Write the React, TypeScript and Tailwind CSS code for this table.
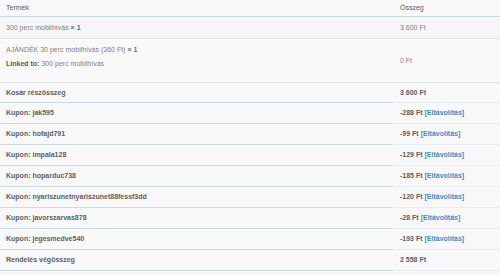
import React from "react";

const coupons: [string, string][] = [
  ["jak595", "-288 Ft"],
  ["hofajd791", "-99 Ft"],
  ["impala128", "-129 Ft"],
  ["hoparduc738", "-185 Ft"],
  ["nyariszunetnyariszunet88fessf3dd", "-120 Ft"],
  ["javorszarvas878", "-28 Ft"],
  ["jegesmedve540", "-193 Ft"],
];

export default function App() {
  return (
    <div
      className="w-[500px] h-[275px] bg-[#f8f8f8] text-[7px] leading-[9px] text-[#7f7f7f] overflow-hidden"
      style={{ fontFamily: '"Liberation Sans", Arial, sans-serif' }}
    >
      <table className="w-full border-collapse">
        <tbody>
          <tr className="h-[16px] bg-[#f8f8f8]">
            <td className="pl-[6px] text-[#606060] border-b border-[#c6dbe5] w-[393px]">Termék</td>
            <td className="pl-[7px] text-[#606060] border-b border-[#c6dbe5]">Összeg</td>
          </tr>
          <tr className="h-[22px] bg-[#f6f6f6]">
            <td className="pl-[6px] border-b border-[#e2e2e2]">
              300 perc mobilhívás <strong className="text-[#6a6a6a]">× 1</strong>
            </td>
            <td className="pl-[7px] border-b border-[#e2e2e2]">3 600 Ft</td>
          </tr>
          <tr className="h-[44px] bg-[#f9f9f9]">
            <td className="pl-[6px] border-b border-[#e2e2e2] align-top pt-[6px]">
              <div>
                AJÁNDÉK 30 perc mobilhívás (360 Ft) <strong className="text-[#6a6a6a]">× 1</strong>
              </div>
              <div className="mt-[5px]">
                <strong className="text-[#5a5a5a]">Linked to:</strong> 300 perc mobilhívás
              </div>
            </td>
            <td className="pl-[7px] border-b border-[#e2e2e2]">0 Ft</td>
          </tr>
          <tr className="h-[20px] font-bold text-[#5e5e5e]">
            <td className="pl-[6px] border-b border-[#c9dce6]">Kosár részösszeg</td>
            <td className="pl-[7px] border-b border-[#e6eef2]">3 600 Ft</td>
          </tr>
          {coupons.map(([code, amount]) => (
            <tr key={code} className="h-[21px] font-bold text-[#5e5e5e]">
              <td className="pl-[6px] border-b border-[#c9dce6]">Kupon: {code}</td>
              <td className="pl-[7px] border-b border-[#e6eef2]">
                {amount} <span className="text-[#3b8fc9]">[Eltávolítás]</span>
              </td>
            </tr>
          ))}
          <tr className="h-[21px] font-bold text-[#5e5e5e]">
            <td className="pl-[6px] border-b border-[#c9dce6]">Rendelés végösszeg</td>
            <td className="pl-[7px] border-b border-[#e6eef2]">2 558 Ft</td>
          </tr>
        </tbody>
      </table>
    </div>
  );
}
